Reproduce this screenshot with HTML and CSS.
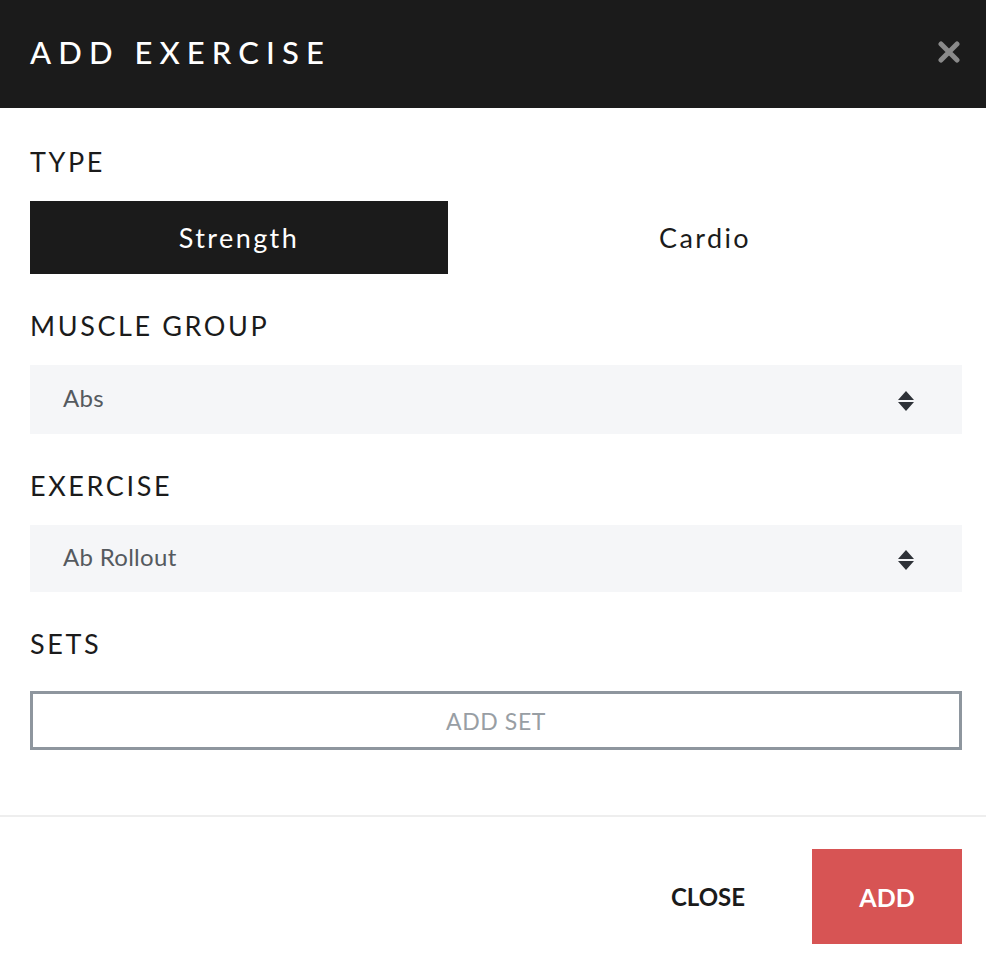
FILE: index.html
```html
<!DOCTYPE html>
<html>
<head>
<meta charset="utf-8">
<link rel="stylesheet" href="styles.css">
</head>
<body>
<div class="modal">
  <header class="modal-header">
    <h1 class="modal-title">ADD EXERCISE</h1>
    <button class="close-x" aria-label="Close">
      <svg width="22" height="22" viewBox="0 0 22 22"><path d="M3 3 L19 19 M19 3 L3 19" stroke="#8a8a8a" stroke-width="5" stroke-linecap="round"/></svg>
    </button>
  </header>
  <main class="modal-body">
    <section class="field">
      <div class="label">TYPE</div>
      <div class="segment">
        <button class="seg-btn active">Strength</button>
        <button class="seg-btn">Cardio</button>
      </div>
    </section>
    <section class="field">
      <div class="label">MUSCLE GROUP</div>
      <div class="select">
        <span class="select-value">Abs</span>
        <svg class="arrows" width="16" height="22" viewBox="0 0 16 22"><path d="M8 1 L16 10 L0 10 Z M0 12 L16 12 L8 21 Z" fill="#2e3238"/></svg>
      </div>
    </section>
    <section class="field">
      <div class="label">EXERCISE</div>
      <div class="select">
        <span class="select-value">Ab Rollout</span>
        <svg class="arrows" width="16" height="22" viewBox="0 0 16 22"><path d="M8 1 L16 10 L0 10 Z M0 12 L16 12 L8 21 Z" fill="#2e3238"/></svg>
      </div>
    </section>
    <section class="field">
      <div class="label">SETS</div>
      <button class="add-set">ADD SET</button>
    </section>
  </main>
  <footer class="modal-footer">
    <button class="btn-close">CLOSE</button>
    <button class="btn-add">ADD</button>
  </footer>
</div>
</body>
</html>
```
FILE: styles.css
```css
* { box-sizing: border-box; }
html, body { margin: 0; padding: 0; background: #fff; }
body { font-family: "Lato", "Noto Sans", sans-serif; color: #1b1b1b; }
button { font-family: inherit; border: none; background: none; cursor: pointer; padding: 0; }

.modal { width: 986px; }

.modal-header {
  height: 108px;
  background: #1b1b1b;
  display: flex;
  align-items: center;
  justify-content: space-between;
  padding: 0 26px 0 30px;
}
.modal-title {
  margin: 0;
  color: #fff;
  font-size: 31px;
  font-weight: 500;
  letter-spacing: 7.1px;
  line-height: 1;
  padding-bottom: 4px;
}
.close-x { display: flex; width: 22px; height: 22px; margin-bottom: 4px; }

.modal-body {
  padding: 39px 24px 65px 30px;
  display: flex;
  flex-direction: column;
}
.field { display: flex; flex-direction: column; }
.field + .field { margin-top: 37px; }
.label {
  font-size: 27px;
  line-height: 30px;
  letter-spacing: 2.6px;
  color: #1b1b1b;
  margin-bottom: 24px;
}

.segment { display: flex; height: 73px; }
.seg-btn {
  flex: 0 0 418px;
  font-size: 27px;
  letter-spacing: 2.4px;
  color: #1b1b1b;
  background: #fff;
}
.seg-btn + .seg-btn { flex: 1; }
.seg-btn.active { background: #1b1b1b; color: #fff; }

.select {
  height: 69px;
  background: #f5f6f8;
  display: flex;
  align-items: center;
  justify-content: space-between;
  padding: 0 48px 0 33px;
}
.field:nth-child(3) .select { height: 67px; }
.select-value { font-size: 24px; color: #555a5f; padding-bottom: 4px; letter-spacing: 0.3px; }
.arrows { margin-top: 2px; }

.add-set {
  margin-top: 8px;
  height: 59px;
  border: 3px solid #8e969e;
  color: #989ea4;
  font-size: 23px;
  letter-spacing: 0.6px;
  text-align: center;
  width: 100%;
}

.modal-footer {
  border-top: 2px solid #eeeeee;
  display: flex;
  justify-content: flex-end;
  align-items: center;
  padding: 32px 24px 26px 30px;
}
.btn-close {
  font-size: 24px;
  font-weight: 700;
  color: #1b1b1b;
  width: 208px;
  height: 95px;
  text-align: center;
}
.btn-add {
  width: 150px;
  height: 95px;
  background: #d75454;
  color: #fff;
  font-size: 25px;
  font-weight: 700;
}
```
